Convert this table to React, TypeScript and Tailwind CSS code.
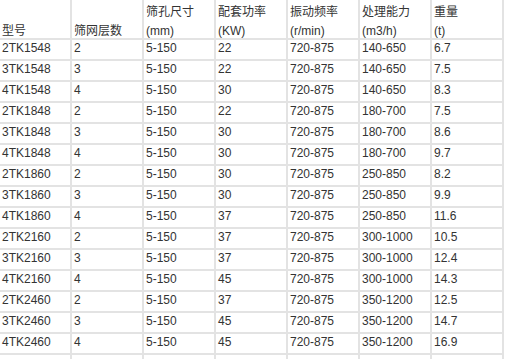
import React from "react"

const headers: [string, string][] = [
  ["", "型号"],
  ["", "筛网层数"],
  ["筛孔尺寸", "(mm)"],
  ["配套功率", "(KW)"],
  ["振动频率", "(r/min)"],
  ["处理能力", "(m3/h)"],
  ["重量", "(t)"],
]

const rows: string[][] = [
  ["2TK1548", "2", "5-150", "22", "720-875", "140-650", "6.7"],
  ["3TK1548", "3", "5-150", "22", "720-875", "140-650", "7.5"],
  ["4TK1548", "4", "5-150", "30", "720-875", "140-650", "8.3"],
  ["2TK1848", "2", "5-150", "22", "720-875", "180-700", "7.5"],
  ["3TK1848", "3", "5-150", "30", "720-875", "180-700", "8.6"],
  ["4TK1848", "4", "5-150", "30", "720-875", "180-700", "9.7"],
  ["2TK1860", "2", "5-150", "30", "720-875", "250-850", "8.2"],
  ["3TK1860", "3", "5-150", "30", "720-875", "250-850", "9.9"],
  ["4TK1860", "4", "5-150", "37", "720-875", "250-850", "11.6"],
  ["2TK2160", "2", "5-150", "37", "720-875", "300-1000", "10.5"],
  ["3TK2160", "3", "5-150", "37", "720-875", "300-1000", "12.4"],
  ["4TK2160", "4", "5-150", "45", "720-875", "300-1000", "14.3"],
  ["2TK2460", "2", "5-150", "37", "720-875", "350-1200", "12.5"],
  ["3TK2460", "3", "5-150", "45", "720-875", "350-1200", "14.7"],
  ["4TK2460", "4", "5-150", "45", "720-875", "350-1200", "16.9"],
  ["", "", "", "", "", "", ""],
]

const App = () => {
  return (
    <div className="h-screen w-screen overflow-hidden bg-white">
      <div
        className="grid w-[504px] grid-cols-[repeat(7,70px)] grid-rows-[38px] auto-rows-[19px] gap-[2px] bg-[#e3e3e3] pr-[2px] text-[12px] text-[#333]"
        style={{ fontFamily: '"Liberation Sans", Arial, "Noto Sans CJK SC", sans-serif' }}
      >
        {headers.map(([top, bottom], i) => (
          <div key={i} className="bg-white pl-[2px] pt-[3px] leading-[19px] whitespace-nowrap">
            <div className="h-[19px]">{top}</div>
            <div>{bottom}</div>
          </div>
        ))}
        {rows.map((row, r) =>
          row.map((cell, c) => (
            <div key={r + "-" + c} className="bg-white pl-[2px] leading-[16px] whitespace-nowrap">
              {cell}
            </div>
          ))
        )}
      </div>
    </div>
  )
}

export default App
